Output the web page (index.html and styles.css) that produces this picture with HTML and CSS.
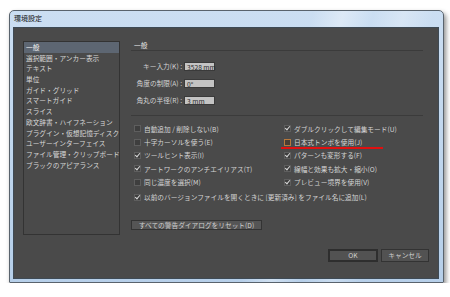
FILE: index.html
```html
<!DOCTYPE html>
<html lang="ja">
<head>
    <meta charset="UTF-8">
    <title>環境設定</title>
    <link rel="stylesheet" href="styles.css">
</head>
<body>
    <div class="window">
        <div class="titlebar">環境設定</div>
        <div class="client">
            <div class="main">
                <ul class="categories">
                    <li class="selected">一般</li>
                    <li>選択範囲・アンカー表示</li>
                    <li>テキスト</li>
                    <li>単位</li>
                    <li>ガイド・グリッド</li>
                    <li>スマートガイド</li>
                    <li>スライス</li>
                    <li>欧文辞書・ハイフネーション</li>
                    <li>プラグイン・仮想記憶ディスク</li>
                    <li>ユーザーインターフェイス</li>
                    <li>ファイル管理・クリップボード</li>
                    <li>ブラックのアピアランス</li>
                </ul>
                <div class="panel">
                    <div class="panel-title">一般</div>
                    <div class="fields">
                        <span class="field-label">キー入力(K) :</span>
                        <span class="input">3528 mm</span>
                        <span class="field-label">角度の制限(A) :</span>
                        <span class="input">0°</span>
                        <span class="field-label">角丸の半径(R) :</span>
                        <span class="input">3 mm</span>
                    </div>
                    <div class="options">
                        <div class="opt"><span class="box"></span>自動追加 / 削除しない(B)</div>
                        <div class="opt"><span class="box checked"></span>ダブルクリックして編集モード(U)</div>
                        <div class="opt"><span class="box"></span>十字カーソルを使う(E)</div>
                        <div class="opt marked"><span class="box focus"></span>日本式トンボを使用(J)</div>
                        <div class="opt"><span class="box checked"></span>ツールヒント表示(I)</div>
                        <div class="opt"><span class="box checked"></span>パターンも変形する(F)</div>
                        <div class="opt"><span class="box checked"></span>アートワークのアンチエイリアス(T)</div>
                        <div class="opt"><span class="box checked"></span>線幅と効果も拡大・縮小(O)</div>
                        <div class="opt"><span class="box"></span>同じ濃度を選択(M)</div>
                        <div class="opt"><span class="box checked"></span>プレビュー境界を使用(V)</div>
                        <div class="opt wide"><span class="box checked"></span>以前のバージョンファイルを開くときに [更新済み] をファイル名に追加(L)</div>
                    </div>
                    <button class="reset">すべての警告ダイアログをリセット(D)</button>
                </div>
            </div>
            <div class="footer">
                <button class="btn default">OK</button>
                <button class="btn">キャンセル</button>
            </div>
        </div>
    </div>
</body>
</html>
```

FILE: styles.css
```css
* {
    box-sizing: border-box;
}

body {
    margin: 0;
    background: #fff;
    font-family: "Noto Sans CJK JP", "Noto Sans", sans-serif;
    font-size: 6.7px;
    color: #d4d4d4;
}

.window {
    width: 435px;
    margin: 10px 0 0 9px;
    padding: 0 4px 3px 3px;
    border: 1px solid #59636d;
    border-radius: 5px 5px 1px 1px;
    background:
        linear-gradient(105deg, transparent 60%, rgba(255, 255, 255, 0.35) 66%, transparent 72%, rgba(255, 255, 255, 0.25) 78%, transparent 84%),
        linear-gradient(to bottom, #cbdef2, #b6cfe9);
    box-shadow: 2px 3px 5px rgba(0, 0, 0, 0.45);
}

.titlebar {
    height: 16px;
    line-height: 15px;
    padding-left: 1px;
    color: #111;
    font-size: 7px;
}

.client {
    height: 252px;
    padding: 13px 9px 16px 9px;
    background: #4a4a4a;
    border: 1px solid #3e4a55;
    display: flex;
    flex-direction: column;
}

.main {
    height: 196px;
    display: grid;
    grid-template-columns: 97px 292px;
    gap: 11px;
}

.categories {
    list-style: none;
    margin: 0;
    padding: 0;
    border: 1px solid #333;
}

.categories li {
    height: 10.7px;
    line-height: 10.7px;
    padding-left: 2px;
    white-space: nowrap;
    color: #d8d8d8;
}

.categories li.selected {
    background: #5d6672;
    color: #eee;
}

.panel {
    display: flex;
    flex-direction: column;
}

.panel-title {
    height: 10px;
    line-height: 8px;
    padding-left: 3px;
    border-bottom: 1px solid #3b3b3b;
    color: #e2e2e2;
}

.fields {
    margin-top: 10px;
    padding-left: 3px;
    display: grid;
    grid-template-columns: 48px 31px;
    column-gap: 2px;
    row-gap: 7px;
    align-items: center;
}

.field-label {
    justify-self: end;
    white-space: nowrap;
}

.input {
    height: 9px;
    line-height: 8px;
    padding-left: 2px;
    background: #c4c4c4;
    border: 1px solid #3a3a3a;
    color: #2a2a2a;
    white-space: nowrap;
}

.options {
    margin-top: 10px;
    padding-top: 6px;
    padding-left: 3px;
    border-top: 1px solid #3b3b3b;
    display: grid;
    grid-template-columns: 150px 1fr;
    grid-auto-rows: 13.4px;
}

.opt {
    position: relative;
    display: flex;
    align-items: center;
    gap: 3px;
    white-space: nowrap;
}

.opt.wide {
    grid-column: 1 / 3;
    margin-top: 3px;
}

.opt.marked::after {
    content: "";
    position: absolute;
    left: -3px;
    top: 12px;
    width: 102px;
    height: 2px;
    background: #e01010;
}

.box {
    width: 7px;
    height: 7px;
    border: 1px solid #5e5e5e;
    background: #3e3e3e;
    position: relative;
    flex: none;
}

.box.focus {
    border-color: #b7783c;
    background: #4a3d33;
}

.box.checked::after {
    content: "";
    position: absolute;
    left: 1px;
    top: -1px;
    width: 2px;
    height: 4px;
    border-right: 1px solid #d8d8d8;
    border-bottom: 1px solid #d8d8d8;
    transform: rotate(40deg);
}

.reset {
    margin-top: 18px;
    width: 131px;
    height: 10px;
    padding: 0;
    background: #555;
    border: 1px solid #333;
    color: #d0d0d0;
    font-family: inherit;
    font-size: 6.7px;
    line-height: 8px;
}

.footer {
    margin-top: 14px;
    display: flex;
    justify-content: flex-end;
    gap: 3px;
}

.btn {
    height: 13px;
    padding: 0;
    background: #525252;
    border: 1px solid #333;
    color: #cfcfcf;
    font-family: inherit;
    font-size: 6.7px;
    line-height: 11px;
    width: 48px;
}

.btn.default {
    width: 50px;
    border: 2px solid #2e2e2e;
    line-height: 9px;
}
```
